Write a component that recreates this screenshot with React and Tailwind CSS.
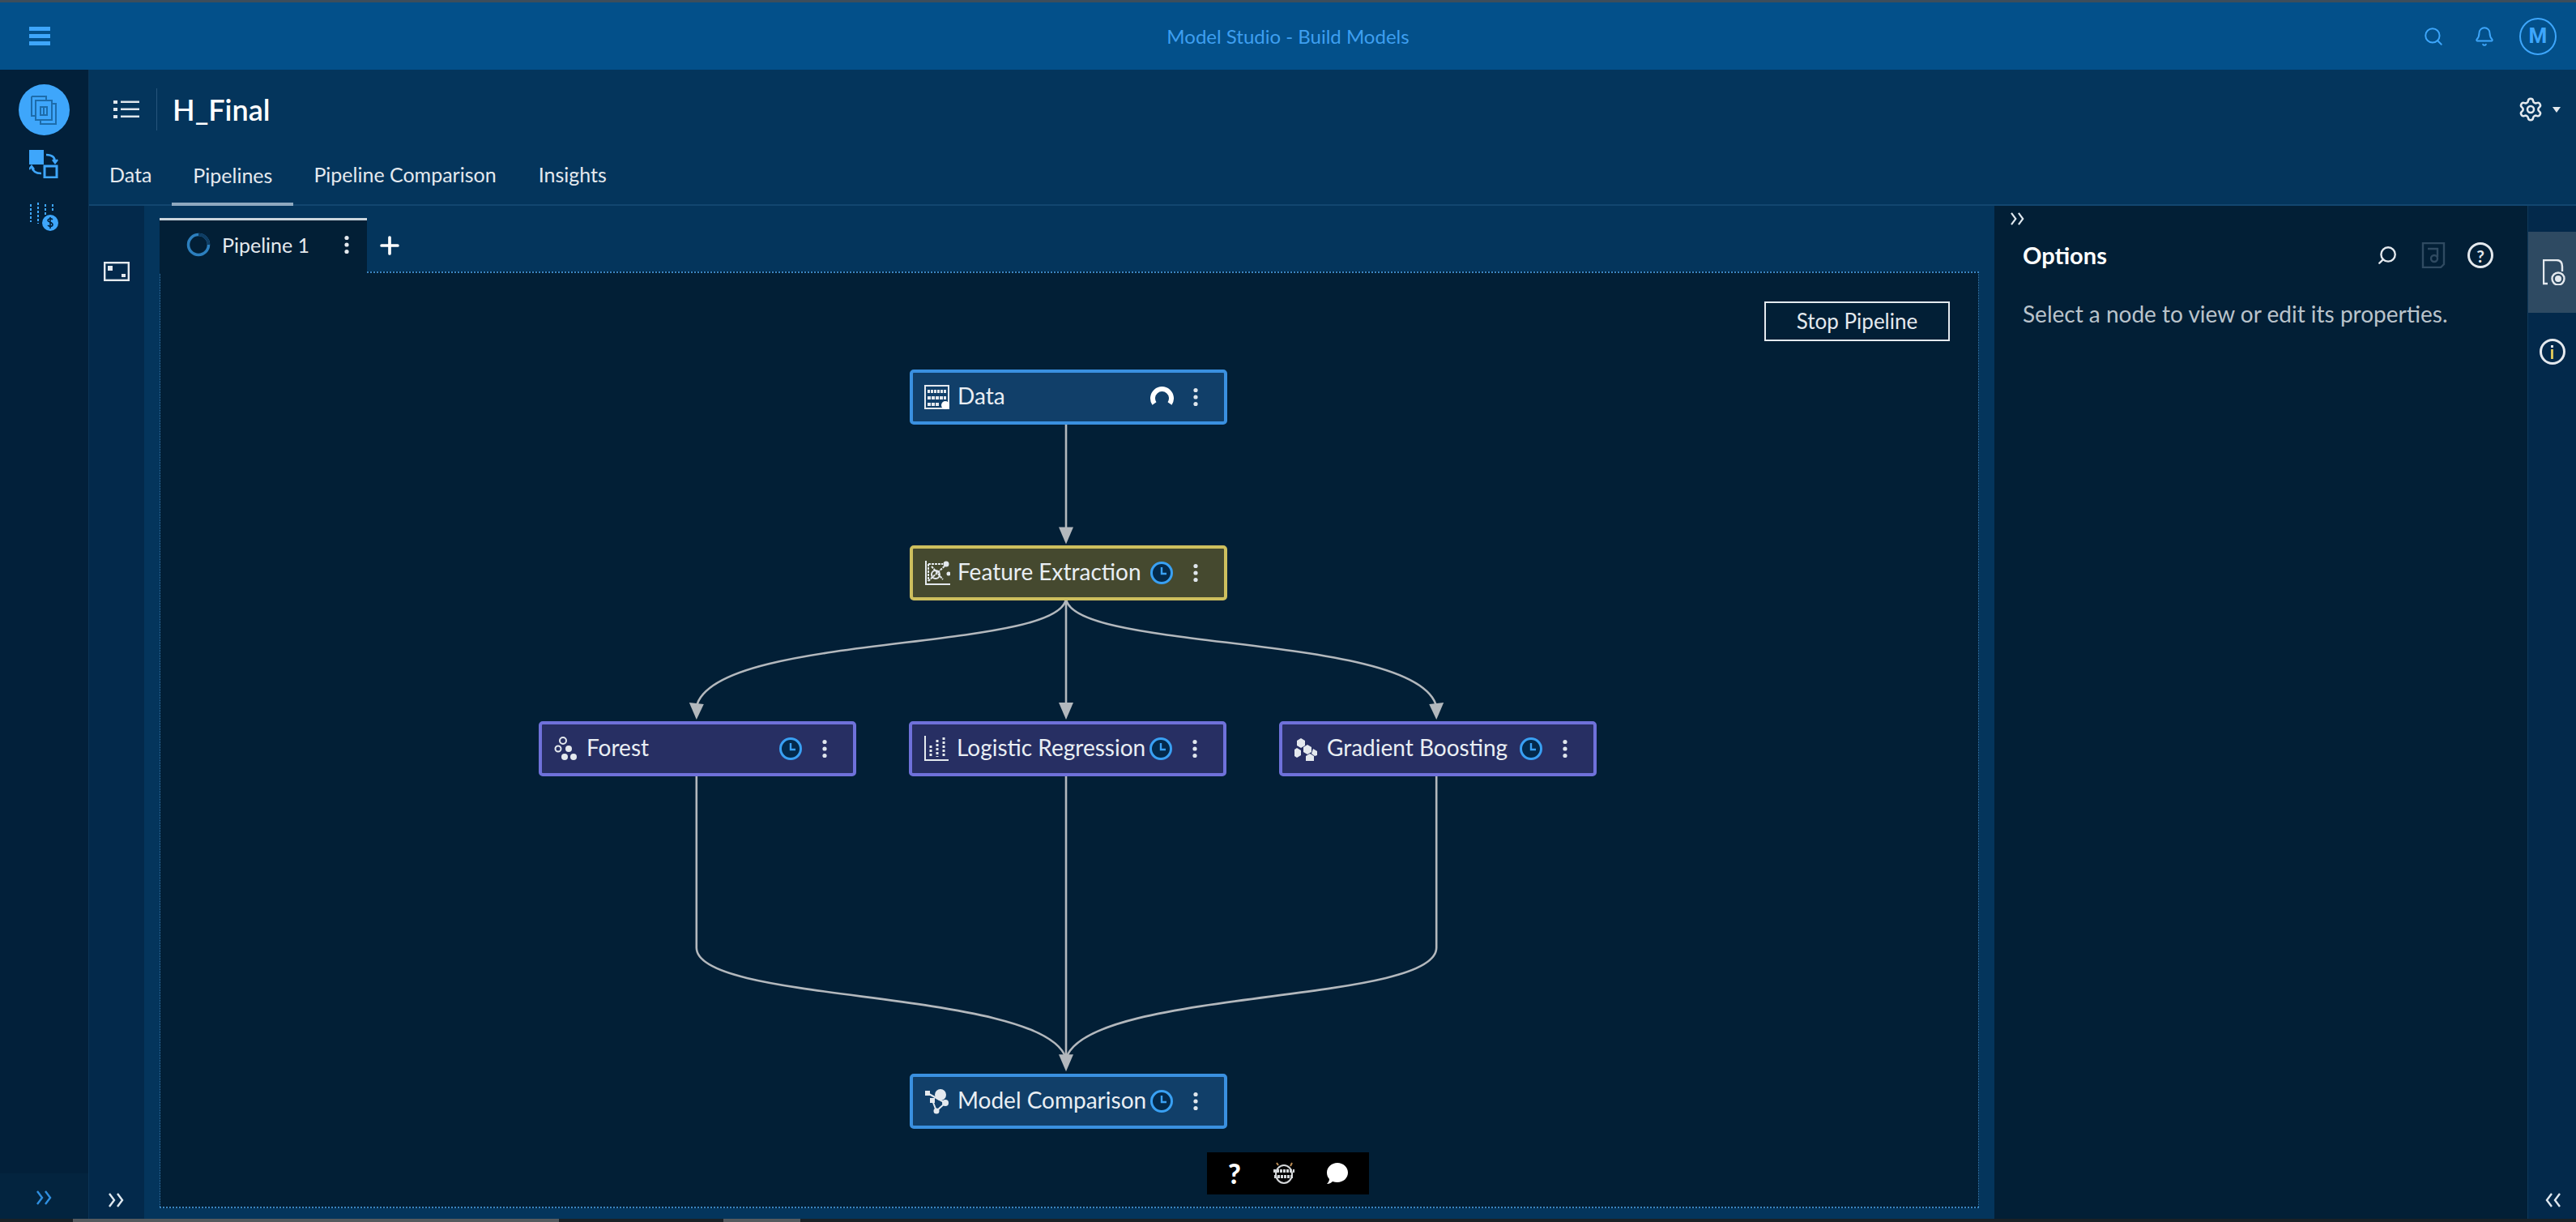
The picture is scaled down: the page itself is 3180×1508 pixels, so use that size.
import React from "react";
import { Search, Bell, Settings, Plus } from "lucide-react";

const nodes = [
  { id: "data", label: "Data", icon: "table", pos: "left-[925px] top-[119px]", tone: "blue", status: "run" },
  { id: "fe", label: "Feature Extraction", icon: "chart", pos: "left-[925px] top-[336px]", tone: "yellow" },
  { id: "forest", label: "Forest", icon: "tree", pos: "left-[467px] top-[553px]", tone: "purple" },
  { id: "logit", label: "Logistic Regression", icon: "bars", pos: "left-[924px] top-[553px]", tone: "purple" },
  { id: "gb", label: "Gradient Boosting", icon: "boost", pos: "left-[1381px] top-[553px]", tone: "purple" },
  { id: "mc", label: "Model Comparison", icon: "compare", pos: "left-[925px] top-[988px]", tone: "blue" },
];

const tones = {
  blue: "bg-[#113f69] border-[#3a90e0]",
  yellow: "bg-[#45492f] border-[#cdbf5e]",
  purple: "bg-[#272f63] border-[#6f71da]",
};

function Dots({ className = "" }) {
  return (
    <svg viewBox="0 0 8 24" className={className} fill="currentColor">
      <circle cx="4" cy="3.5" r="2.6" />
      <circle cx="4" cy="12" r="2.6" />
      <circle cx="4" cy="20.5" r="2.6" />
    </svg>
  );
}

function Chevrons({ flip, className = "" }) {
  return (
    <svg viewBox="0 0 22 18" className={className} fill="none" stroke="currentColor" strokeWidth="2.4">
      {flip ? (
        <path d="M10 1 4 9l6 8M20 1l-6 8 6 8" />
      ) : (
        <path d="M2 1l6 8-6 8M12 1l6 8-6 8" />
      )}
    </svg>
  );
}

function NodeIcon({ type }) {
  const cls = "w-[32px] h-[32px] shrink-0 text-[#e4e9ee]";
  if (type === "table")
    return (
      <svg viewBox="0 0 32 32" className={cls} fill="none" stroke="currentColor" strokeWidth="2">
        <rect x="1" y="2" width="29" height="28" />
        <path d="M4 8h23M4 10h23" strokeDasharray="3 1" />
        <path d="M4 16h23M4 18h23M4 24h14M4 26h14" strokeDasharray="4 1" />
        <circle cx="26" cy="26" r="5" fill="#fff" stroke="none" />
      </svg>
    );
  if (type === "chart")
    return (
      <svg viewBox="0 0 32 32" className={cls} fill="none" stroke="currentColor" strokeWidth="2">
        <path d="M2 1v29h30" />
        <path d="M5 5h18M5 5v21M5 26 29 4M9 8l14 16" strokeDasharray="3 1" />
        <circle cx="27" cy="5" r="2.5" fill="currentColor" />
        <circle cx="14" cy="18" r="5" />
        <circle cx="30" cy="17" r="1.5" fill="currentColor" />
      </svg>
    );
  if (type === "tree")
    return (
      <svg viewBox="0 0 32 32" className={cls} fill="currentColor">
        <circle cx="12" cy="6" r="4" fill="none" stroke="currentColor" strokeWidth="2" />
        <circle cx="6" cy="16" r="3.5" fill="none" stroke="currentColor" strokeWidth="2" />
        <circle cx="19" cy="16" r="4" />
        <circle cx="14" cy="26" r="4" />
        <circle cx="25" cy="26" r="4" />
      </svg>
    );
  if (type === "bars")
    return (
      <svg viewBox="0 0 32 32" className={cls} fill="none" stroke="currentColor" strokeWidth="2">
        <path d="M2 0v30h29" />
        <path d="M9 12v14M17 5v21M25 2v24" strokeWidth="3" strokeDasharray="3 2" />
      </svg>
    );
  if (type === "boost")
    return (
      <svg viewBox="0 0 32 32" className={cls} fill="currentColor">
        <path d="M9 3l5 3v6l-5 3-5-3V6z" />
        <path d="M4 15l5 3v6l-5 3-3-2V17z" />
        <path d="M17 11l5 3v6l-5 3-5-3v-6z" />
        <path d="M20 22l5 3v6h-10v-6z" />
        <path d="M24 16l5 3v5l-3 1-4-3z" />
      </svg>
    );
  return (
    <svg viewBox="0 0 32 32" className={cls} fill="currentColor">
      <circle cx="20" cy="8" r="7" />
      <rect x="1" y="3" width="6" height="6" />
      <rect x="7" y="12" width="6" height="6" />
      <circle cx="15" cy="28" r="3.5" />
      <circle cx="26" cy="18" r="4" />
      <path d="M4 6 26 18 15 28 10 15" fill="none" stroke="currentColor" strokeWidth="2" />
    </svg>
  );
}

function Status({ type }) {
  if (type === "run")
    return (
      <svg viewBox="0 0 30 30" className="w-[30px] h-[30px] shrink-0" fill="none" stroke="#fff" strokeWidth="6">
        <path d="M6 23A11.5 11.5 0 1 1 25 23" />
      </svg>
    );
  return (
    <svg viewBox="0 0 30 30" className="w-[30px] h-[30px] shrink-0" fill="#03294b" stroke="#39a0f3" strokeWidth="3">
      <circle cx="15" cy="15" r="12.5" />
      <path d="M15 8v8h6" fill="none" strokeWidth="2.4" />
    </svg>
  );
}

function Node({ node }) {
  return (
    <div
      className={`absolute ${node.pos} w-[392px] h-[68px] rounded-[5px] border-[4px] flex items-center pl-[14px] pr-[31px] text-[#e9eef3] ${tones[node.tone]}`}
    >
      <NodeIcon type={node.icon} />
      <div className="ml-[9px] w-[237px] overflow-hidden whitespace-nowrap text-[28px] leading-[36px] -translate-y-[2px]">
        {node.label}
      </div>
      <Status type={node.status} />
      <div className="flex-1" />
      <Dots className="w-[8px] h-[24px] text-[#dfe6ec]" />
    </div>
  );
}

function Edges() {
  const paths = [
    "M1316 521V655",
    "M1316 738V872",
    "M1316 738C1310 805 880 780 859 872",
    "M1316 738C1322 805 1752 780 1774 872",
    "M859 956V1170C859 1240 1290 1220 1316 1307",
    "M1316 956V1307",
    "M1774 956V1170C1774 1240 1342 1220 1316 1307",
  ];
  const heads = [
    "M1307 650h18l-9 21z",
    "M1307 867h18l-9 21z",
    "M850 867l18 2-9 19z",
    "M1765 869l18-2-9 21z",
    "M1307 1302h18l-9 21z",
  ];
  return (
    <svg viewBox="198 336 2244 1154" className="absolute inset-0 w-full h-full" fill="none">
      {paths.map((d) => (
        <path key={d} d={d} stroke="#b3b8bd" strokeWidth="2.6" />
      ))}
      {heads.map((d) => (
        <path key={d} d={d} fill="#b3b8bd" />
      ))}
    </svg>
  );
}

function LeftRail() {
  return (
    <div className="w-[110px] shrink-0 flex flex-col bg-[#02203a] border-r border-[#0b3556]">
      <div className="flex-1 flex flex-col items-center pt-[18px] pr-[1px]">
        <div className="w-[63px] h-[63px] rounded-full bg-[#3ea6fb] flex items-center justify-center">
          <svg viewBox="0 0 36 36" className="w-[36px] h-[36px]" fill="none" stroke="#1d6cab" strokeWidth="2">
            <path d="M3 1h18v5M3 1v24h5" />
            <rect x="8" y="6" width="20" height="24" />
            <path d="M28 10h5v25H14v-5" />
            <rect x="14" y="14" width="8" height="10" />
            <path d="M18 14v10" />
          </svg>
        </div>
        <svg viewBox="0 0 36 36" className="w-[36px] h-[36px] mt-[17px]" fill="none" stroke="#3ea6fb" strokeWidth="2.4">
          <rect x="0" y="1" width="18" height="18" fill="#3ea6fb" stroke="none" />
          <path d="M21 7c7 0 11 3 11 9M29 13l3 4 3-4" />
          <rect x="19" y="21" width="15" height="14" strokeWidth="3" />
          <path d="M15 30C8 30 4 27 3 21M0 25l3-4 3 4" />
        </svg>
        <svg viewBox="0 0 36 36" className="w-[36px] h-[36px] mt-[30px]" fill="none" stroke="#3ea6fb" strokeWidth="2">
          <path d="M2 2v22M11 0v26M20 2v14M29 2v10" strokeDasharray="3 2" />
          <circle cx="26" cy="25" r="10" fill="#3ea6fb" stroke="none" />
          <path d="M29 21c-2-2-6-1-6 1s6 2 6 5-4 3-6 1M26 18v14" stroke="#02203a" strokeWidth="1.6" />
        </svg>
      </div>
      <div className="h-[56px] bg-[#03243f] flex justify-center pt-[21px]">
        <Chevrons className="w-[22px] h-[18px] text-[#2f8fe0]" />
      </div>
    </div>
  );
}

function PipelineTabs() {
  return (
    <div className="h-[81px] shrink-0 flex items-end">
      <div className="relative z-10 -mb-[2px] w-[256px] h-[68px] bg-[#021f36] border-t-[3px] border-[#cbd5dd] flex items-center pl-[33px] pb-[5px] text-[#e4e9ee]">
        <svg viewBox="0 0 30 30" className="w-[30px] h-[30px]" fill="none" strokeWidth="3.5">
          <circle cx="15" cy="15" r="12.5" stroke="#2c7fbe" />
          <path d="M15 2.5A12.5 12.5 0 0 1 27.5 15" stroke="#0f3d63" />
        </svg>
        <span className="ml-[14px] text-[25px] leading-[32px]">Pipeline 1</span>
        <Dots className="ml-[42px] w-[8px] h-[24px] text-[#e4e9ee]" />
      </div>
      <Plus className="ml-[11px] mb-[15px] w-[34px] h-[34px] text-white" strokeWidth={2.6} />
    </div>
  );
}

export default function App() {
  return (
    <div className="w-screen h-screen overflow-hidden flex flex-col bg-[#04355c] font-['Lato',sans-serif]">
      <div className="h-[3px] shrink-0 bg-[#3d4d5b]" />
      {/* top bar */}
      <div className="h-[83px] shrink-0 relative flex items-center justify-between pl-[36px] pr-[24px] bg-[#03508a]">
        <div className="flex flex-col gap-[4px] w-[26px]">
          <div className="h-[5px] bg-[#3ea6fb]" />
          <div className="h-[5px] bg-[#3ea6fb]" />
          <div className="h-[5px] bg-[#3ea6fb]" />
        </div>
        <div className="absolute inset-x-0 text-center pl-[0px] text-[24px] text-[#3e9ff0]">Model Studio - Build Models</div>
        <div className="relative flex items-center text-[#3ea6fb]">
          <Search className="w-[26px] h-[26px]" strokeWidth={1.8} />
          <Bell className="ml-[37px] w-[26px] h-[26px]" strokeWidth={1.8} />
          <div className="ml-[30px] w-[46px] h-[46px] rounded-full border-2 border-[#3ea6fb] flex items-center justify-center text-[26px] font-bold font-['Roboto',sans-serif]">
            M
          </div>
        </div>
      </div>

      <div className="flex-1 min-h-0 flex">
        <LeftRail />
        <div className="flex-1 min-w-0 flex flex-col">
          {/* header */}
          <div className="h-[168px] shrink-0 flex flex-col border-b-[2px] border-[#12466f] bg-[#04355c]">
            <div className="h-[100px] flex items-center pl-[30px] pr-[19px]">
              <svg viewBox="0 0 32 24" className="w-[32px] h-[24px]" fill="#dfe6ec">
                <rect x="0" y="1" width="5" height="4" />
                <rect x="0" y="10" width="5" height="4" />
                <rect x="0" y="19" width="5" height="4" />
                <rect x="9" y="1.5" width="23" height="2.5" />
                <rect x="9" y="10.5" width="23" height="2.5" />
                <rect x="9" y="19.5" width="23" height="2.5" />
              </svg>
              <div className="ml-[21px] w-[1px] h-[52px] bg-[#26557b]" />
              <div className="ml-[19px] text-[36px] leading-[44px] font-semibold text-white">H_Final</div>
              <div className="flex-1" />
              <Settings className="w-[32px] h-[32px] text-[#e4e9ee]" strokeWidth={1.9} />
              <div className="ml-[11px] w-0 h-0 border-x-[5px] border-x-transparent border-t-[7px] border-t-[#e4e9ee]" />
            </div>
            <div className="h-[68px] flex text-[25px] text-[#e4e9ee]">
              <div className="px-[25px] flex items-center pb-[6px]">Data</div>
              <div className="px-[26px] flex items-center pb-[2px] border-b-[4px] border-[#8fa9bf] -mb-[2px]">Pipelines</div>
              <div className="px-[25px] flex items-center pb-[6px]">Pipeline Comparison</div>
              <div className="px-[27px] flex items-center pb-[6px]">Insights</div>
            </div>
          </div>

          <div className="flex-1 min-h-0 flex">
            {/* side column */}
            <div className="w-[68px] shrink-0 flex flex-col items-center justify-between bg-[#03294b] pt-[69px] pb-[14px]">
              <svg viewBox="0 0 32 24" className="w-[32px] h-[24px]" fill="none" stroke="#e4e9ee" strokeWidth="2.4">
                <rect x="1.2" y="1.2" width="29.6" height="21.6" />
                <rect x="5" y="5" width="6" height="6" fill="#e4e9ee" stroke="none" />
                <rect x="22" y="15" width="5" height="4" fill="#e4e9ee" stroke="none" />
              </svg>
              <Chevrons className="w-[22px] h-[18px] text-[#dfe8ef]" />
            </div>

            {/* canvas */}
            <div className="flex-1 min-w-0 flex flex-col px-[19px] pb-[13px] bg-[#04355c]">
              <PipelineTabs />
              <div className="flex-1 min-h-0 relative bg-[#021f36] border-x border-t-2 border-b-2 border-dotted border-[#3a85c0]">
                <Edges />
                {nodes.map((n) => (
                  <Node key={n.id} node={n} />
                ))}
                <div className="absolute top-[35px] right-[35px] w-[229px] h-[49px] border-2 border-[#e4e9ee] flex items-center justify-center text-[26px] text-[#e4e9ee]">
                  Stop Pipeline
                </div>
                <div className="absolute left-[1292px] top-[1085px] w-[200px] h-[52px] bg-black flex items-center justify-between px-[26px] text-white">
                  <span className="text-[34px] leading-none font-black">?</span>
                  <svg viewBox="0 0 30 30" className="w-[30px] h-[30px]" fill="none" stroke="#d5d8da" strokeWidth="2">
                    <ellipse cx="15" cy="16" rx="10" ry="11" />
                    <path d="M2 12h26M3 19h24" strokeWidth="4" strokeDasharray="3 1" />
                    <path d="M23 6l2-4M8 5 6 2" stroke="#b98b54" />
                  </svg>
                  <svg viewBox="0 0 26 26" className="w-[26px] h-[26px]" fill="#fff">
                    <path d="M13 0c7 0 13 5 13 12s-6 12-13 12c-2 0-4-.4-6-1-2 2-4 3-7 3 2-2 3-4 3-6-2-2-3-5-3-8C0 5 6 0 13 0z" />
                  </svg>
                </div>
              </div>
            </div>

            {/* options panel */}
            <div className="w-[658px] shrink-0 flex flex-col bg-[#021f36] pl-[35px] pr-[42px]">
              <Chevrons className="mt-[8px] -ml-[17px] w-[22px] h-[16px] text-[#dfe8ef]" />
              <div className="mt-[20px] flex items-center h-[34px] text-[#e4e9ee]">
                <div className="text-[29px] font-bold text-white">Options</div>
                <div className="flex-1" />
                <Search className="w-[26px] h-[26px] -scale-x-100" strokeWidth={2.2} />
                <svg viewBox="0 0 32 32" className="ml-[28px] w-[32px] h-[32px]" fill="none" stroke="#2f4a61" strokeWidth="2.4">
                  <path d="M3 1h26v26l-4 4H3z" />
                  <path d="M9 8h12v10" />
                  <circle cx="17" cy="20" r="4" />
                </svg>
                <div className="ml-[26px] w-[32px] h-[32px] rounded-full border-[3px] border-[#e4e9ee] flex items-center justify-center text-[21px] font-bold leading-none">
                  ?
                </div>
              </div>
              <div className="mt-[37px] text-[28px] leading-[36px] whitespace-nowrap text-[#b9c3cb]">
                Select a node to view or edit its properties.
              </div>
            </div>

            {/* right rail */}
            <div className="w-[60px] shrink-0 flex flex-col items-center bg-[#03294b] border-l border-[#0f3a5c] pt-[32px]">
              <div className="w-full h-[100px] bg-[#2e4a62] flex items-center justify-center pl-[4px]">
                <svg viewBox="0 0 28 32" className="w-[28px] h-[32px]" fill="none" stroke="#e4e9ee" strokeWidth="2.4">
                  <path d="M6 30H1V1h16c5 0 7 3 7 8v6" />
                  <circle cx="19" cy="24" r="7.5" />
                  <circle cx="19" cy="24" r="4" fill="#e4e9ee" stroke="none" />
                </svg>
              </div>
              <div className="mt-[32px] w-[32px] h-[32px] rounded-full border-[3px] border-[#e4e9ee] flex flex-col items-center justify-center gap-[2px]">
                <div className="w-[3px] h-[3px] bg-[#e4e9ee]" />
                <div className="w-[3px] h-[12px] bg-[#d8c45a]" />
              </div>
              <div className="flex-1" />
              <Chevrons flip className="mb-[14px] w-[22px] h-[18px] text-[#dfe8ef]" />
            </div>
          </div>
        </div>
      </div>

      {/* window scrollbar strip */}
      <div className="h-[4px] shrink-0 flex bg-[#1a2126]">
        <div className="ml-[90px] w-[600px] bg-[#555a5e]" />
        <div className="ml-[203px] w-[95px] bg-[#555a5e]" />
      </div>
    </div>
  );
}
